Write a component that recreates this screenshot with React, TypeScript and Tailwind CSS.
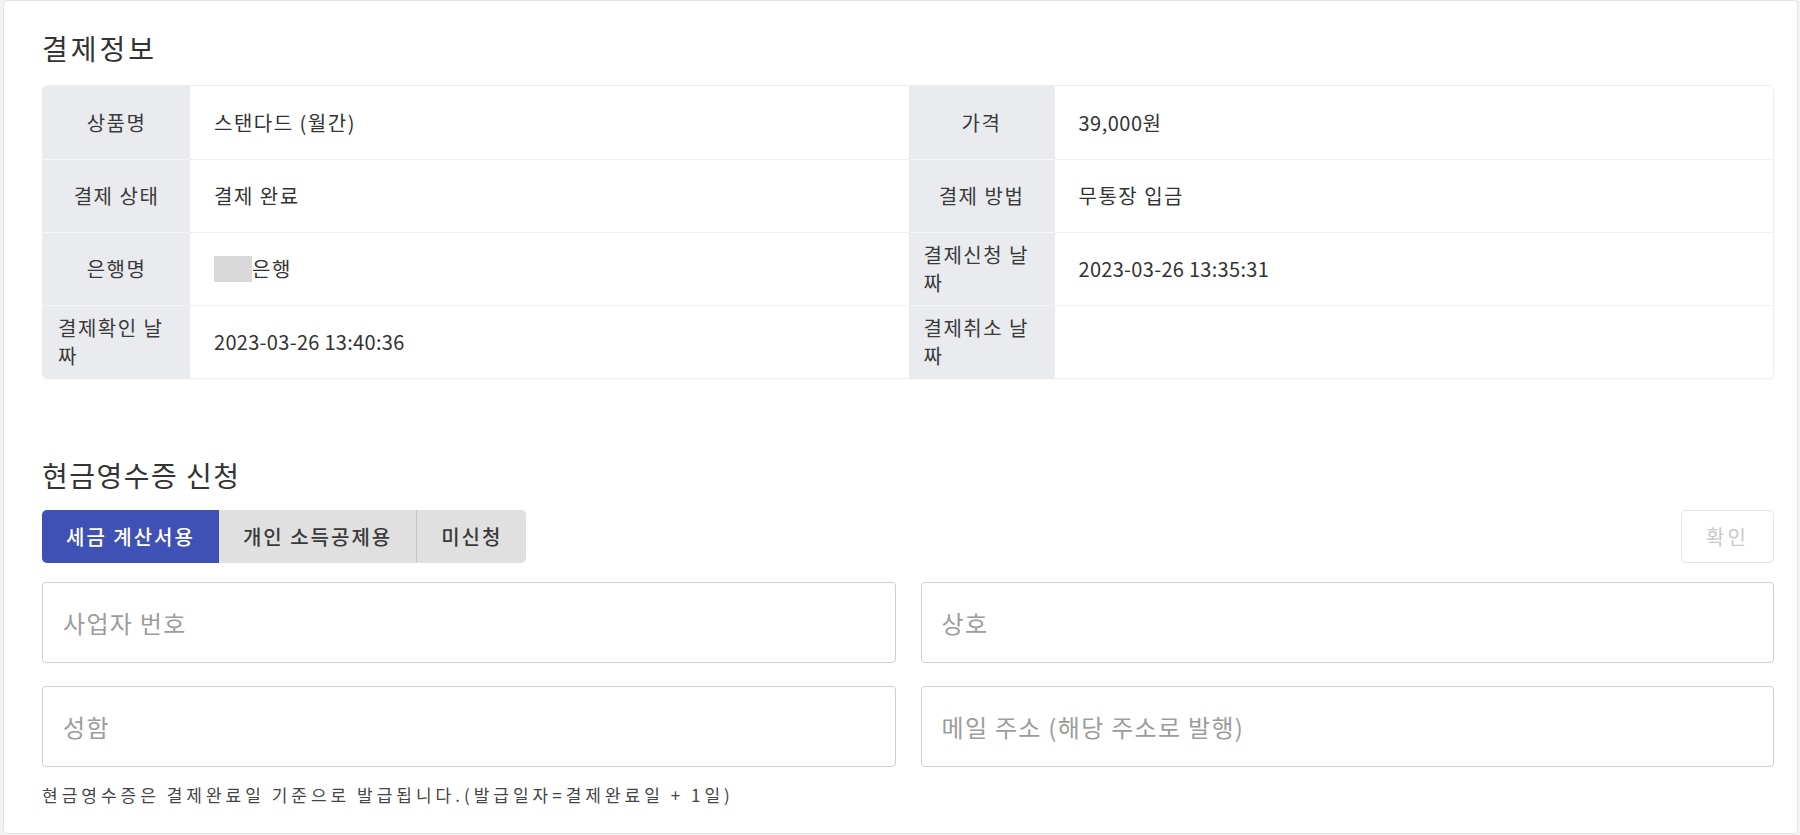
const rows: [string, React.ReactNode, string, React.ReactNode][] = [
  ["상품명", "스탠다드 (월간)", "가격", <span className="tracking-[0.5px]">39,000원</span>],
  ["결제 상태", "결제 완료", "결제 방법", "무통장 입금"],
  [
    "은행명",
    <span className="flex items-center">
      <span className="inline-block w-[38px] h-[26px] bg-[#d9d9d9]" />
      은행
    </span>,
    "결제신청 날짜",
    <span className="tracking-[0.3px]">2023-03-26 13:35:31</span>,
  ],
  ["결제확인 날짜", <span className="tracking-[0.3px]">2023-03-26 13:40:36</span>, "결제취소 날짜", ""],
];

function Label({ text, first }: { text: string; first: boolean }) {
  return (
    <div
      className={`h-[73px] px-[15px] flex items-center justify-center bg-[#e9ebee] text-[#3a3a3a] leading-[28px] ${
        first ? "" : "border-t border-[#f4f5f7]"
      }`}
    >
      <span>{text}</span>
    </div>
  );
}

function Value({ children, first }: { children: React.ReactNode; first: boolean }) {
  return (
    <div
      className={`h-[73px] pl-[24px] pr-[15px] flex items-center text-[#333] ${
        first ? "" : "border-t border-[#eef0f2]"
      }`}
    >
      {children}
    </div>
  );
}

const inputCls =
  "h-[81px] border border-[#cfcfcf] rounded-[4px] px-[20px] text-[24px] tracking-[1.3px] placeholder:text-[#9c9c9c] outline-none";

export default function App() {
  return (
    <div
      className="min-h-screen bg-[#f3f3f3] pl-[3px] pr-[2px]"
      style={{ fontFamily: '"Noto Sans CJK KR", "Noto Sans", sans-serif' }}
    >
      <div className="h-[834px] bg-white border border-[#e3e3e3] rounded-[4px] pl-[38px] pr-[23px] pt-[26px]">
        <h2 className="text-[28px] leading-[42px] tracking-[3px] text-[#333] mb-[16px]">결제정보</h2>

        <div className="grid grid-cols-[147px_1fr_146px_1fr] text-[20px] tracking-[1.5px] border border-[#eceef0] rounded-[5px] overflow-hidden shadow-[0_1px_2px_rgba(0,0,0,0.04)]">
          {rows.map((r, i) => (
            <div key={i} className="contents">
              <Label text={r[0]} first={i === 0} />
              <Value first={i === 0}>{r[1]}</Value>
              <Label text={r[2]} first={i === 0} />
              <Value first={i === 0}>{r[3]}</Value>
            </div>
          ))}
        </div>

        <h2 className="mt-[75px] text-[28px] leading-[42px] tracking-[1.5px] text-[#333] mb-[14px]">
          현금영수증 신청
        </h2>

        <div className="flex items-center">
          <div className="inline-flex rounded-[5px] overflow-hidden bg-[#e0e0e0] text-[20px] font-medium">
            <button className="h-[53px] px-6 bg-[#3f51b5] text-white tracking-[2px]">세금 계산서용</button>
            <button className="h-[53px] px-6 text-[#3a3a3a] tracking-[2px]">개인 소득공제용</button>
            <button className="h-[53px] px-6 text-[#3a3a3a] tracking-[2px] border-l border-[#c6c6c6]">미신청</button>
          </div>
          <button className="ml-auto w-[93px] h-[53px] border border-[#e4e4e4] rounded-[5px] text-[20px] text-[#c9c9c9] tracking-[3px]">
            확인
          </button>
        </div>

        <div className="grid grid-cols-2 gap-x-[25px] gap-y-[23px] mt-[19px]">
          <input placeholder="사업자 번호" className={inputCls} />
          <input placeholder="상호" className={inputCls} />
          <input placeholder="성함" className={inputCls} />
          <input placeholder="메일 주소 (해당 주소로 발행)" className={inputCls} />
        </div>

        <p className="mt-[16px] text-[17px] leading-[24px] tracking-[4px] [word-spacing:-1px] text-[#444]">
          현금영수증은 결제완료일 기준으로 발급됩니다.(발급일자=결제완료일 + 1일)
        </p>
      </div>
    </div>
  );
}
